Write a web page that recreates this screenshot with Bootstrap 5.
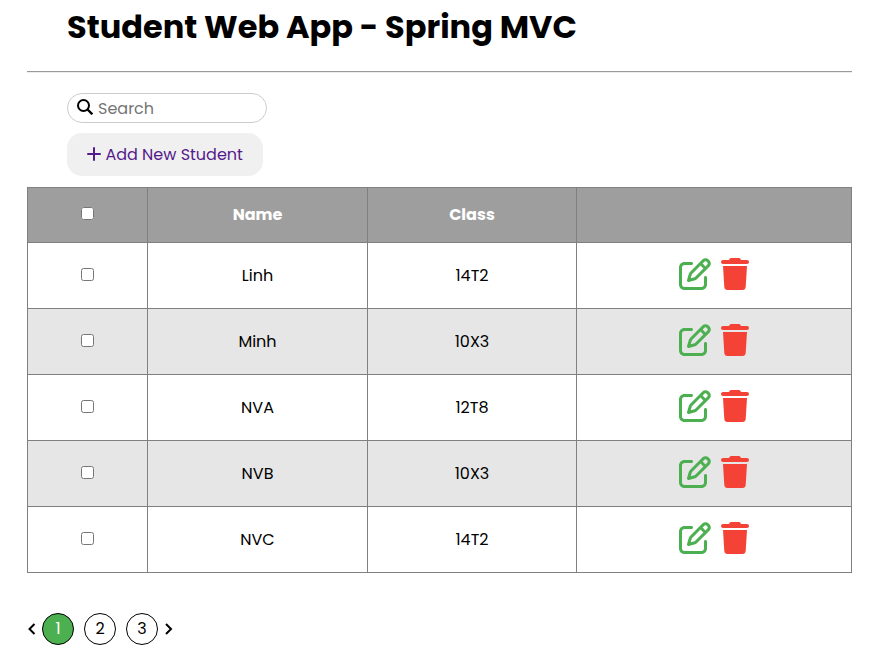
<!DOCTYPE html>
<html lang="en">
<head>
<meta charset="utf-8">
<meta name="viewport" content="width=device-width, initial-scale=1">
<title>Student Web App</title>
<link href="https://cdn.jsdelivr.net/npm/bootstrap@5.3.0/dist/css/bootstrap.min.css" rel="stylesheet">
<style>
body{font-family:Poppins,Inter,"Open Sans",sans-serif;font-size:16px;color:#000;background:#fff;overflow:hidden}
.page{width:825px;margin-left:27px;padding-top:3px}
.title{font-size:32px;line-height:48px;font-weight:700;margin:0 0 0 40px;white-space:nowrap}
.rule{height:2px;border:0;border-top:1px solid #9a9a9a;border-bottom:1px solid #ededed;opacity:1;margin:20px 0 20px;background:none}
.search{width:200px;height:30px;border:1px solid #ccc;border-radius:15px;margin-left:40px;padding:2px 0 0 9px}
.search input{width:150px;padding:0;margin-left:5px;outline:0;line-height:24px}
.search input::placeholder{color:#757575;opacity:1}
.add{width:196px;height:43px;background:#f0f0f0;border-radius:15px;margin:10px 0 11px 40px;color:#551a8b;padding-left:20px;white-space:nowrap}
.add:hover{color:#551a8b}
.add svg{margin-right:4.4px;margin-bottom:1px}
.students{table-layout:fixed;width:825px;border-collapse:collapse}
.students th,.students td{border:1px solid #808080;padding:0;height:66px}
.students th{height:55px;background:#9e9e9e;color:#fff;font-weight:700}
.students tbody tr:nth-child(even){background:#e6e6e6}
.students input{width:13px;height:13px;margin:0 auto 2px;display:block}
.students th input{margin-bottom:3px}
.actions{gap:10.5px;padding:0 .5px 4px 0}
.pager{margin-top:40px;height:32px}
.pager a{color:#000;text-decoration:none}
.prev{margin-right:5px}
.num{width:32px;height:32px;border:1px solid #000;border-radius:50%;margin-right:10px}
.pager .num.current{background:#4caf50;color:#fff}
.num.final{margin-right:5px}
</style>
<script src="https://cdn.jsdelivr.net/npm/bootstrap@5.3.0/dist/js/bootstrap.bundle.min.js"></script>
</head>
<body>
<svg class="d-none">
<symbol id="edit" viewBox="0 0 512 512"><path fill="#4caf50" d="M441 58.900L453.100 71c9.400 9.400 9.400 24.600 0 33.900L424 134.100 377.900 88 407 58.900c9.400-9.400 24.600-9.400 33.900 0zM209.800 256.200L344 121.900 390.100 168 255.800 302.200c-2.900 2.900-6.500 5-10.400 6.100l-58.500 16.700 16.700-58.500c1.100-3.900 3.200-7.500 6.100-10.400zM373.100 25L175.800 222.200c-8.700 8.700-15 19.400-18.300 31.100l-28.600 100c-2.400 8.400-.1 17.400 6.100 23.600s15.200 8.500 23.600 6.100l100-28.600c11.800-3.400 22.500-9.700 31.100-18.300L487 138.900c28.100-28.100 28.100-73.700 0-101.800L474.900 25C446.800-3.100 401.200-3.100 373.100 25zM88 64C39.400 64 0 103.400 0 152V424c0 48.600 39.400 88 88 88H360c48.600 0 88-39.400 88-88V312c0-13.300-10.700-24-24-24s-24 10.700-24 24V424c0 22.100-17.900 40-40 40H88c-22.100 0-40-17.900-40-40V152c0-22.100 17.900-40 40-40H200c13.300 0 24-10.700 24-24s-10.700-24-24-24H88z"/></symbol>
<symbol id="trash" viewBox="0 0 448 512"><path fill="#f44336" d="M135.200 17.700C140.600 6.800 151.700 0 163.800 0H284.200c12.100 0 23.200 6.800 28.600 17.700L320 32h96c17.700 0 32 14.300 32 32s-14.300 32-32 32H32C14.300 96 0 81.700 0 64S14.300 32 32 32h96zM32 128H416L394.800 467c-1.600 25.300-22.600 45-47.900 45H101.100c-25.300 0-46.300-19.700-47.900-45z"/></symbol>
</svg>
<main class="page">
<h1 class="title">Student Web App - Spring MVC</h1>
<hr class="rule">
<div class="search d-flex align-items-center">
<svg width="16" height="16" viewBox="0 0 16 16" fill="none" stroke="#000" stroke-width="2" class="flex-shrink-0 mb-1"><circle cx="6.500" cy="6.500" r="5.500"/><path d="M10.300 10.300l5 5" stroke-width="2.300"/></svg>
<input class="border-0 bg-transparent" type="text" placeholder="Search">
</div>
<a href="#" class="add d-flex align-items-center text-decoration-none">
<svg width="14" height="14" viewBox="0 0 14 14" stroke="#551a8b" stroke-width="2" stroke-linecap="round"><path d="M7 1v12M1 7h12"/></svg><span>Add New Student</span></a>
<table class="students text-center align-middle">
<colgroup><col style="width:120px"><col style="width:220px"><col style="width:209px"><col style="width:275px"></colgroup>
<thead><tr><th><input type="checkbox"></th><th>Name</th><th>Class</th><th></th></tr></thead>
<tbody>
<tr><td><input type="checkbox"></td><td>Linh</td><td>14T2</td><td><div class="actions d-flex justify-content-center"><svg width="32" height="32"><use href="#edit"/></svg><svg width="28" height="32"><use href="#trash"/></svg></div></td></tr>
<tr><td><input type="checkbox"></td><td>Minh</td><td>10X3</td><td><div class="actions d-flex justify-content-center"><svg width="32" height="32"><use href="#edit"/></svg><svg width="28" height="32"><use href="#trash"/></svg></div></td></tr>
<tr><td><input type="checkbox"></td><td>NVA</td><td>12T8</td><td><div class="actions d-flex justify-content-center"><svg width="32" height="32"><use href="#edit"/></svg><svg width="28" height="32"><use href="#trash"/></svg></div></td></tr>
<tr><td><input type="checkbox"></td><td>NVB</td><td>10X3</td><td><div class="actions d-flex justify-content-center"><svg width="32" height="32"><use href="#edit"/></svg><svg width="28" height="32"><use href="#trash"/></svg></div></td></tr>
<tr><td><input type="checkbox"></td><td>NVC</td><td>14T2</td><td><div class="actions d-flex justify-content-center"><svg width="32" height="32"><use href="#edit"/></svg><svg width="28" height="32"><use href="#trash"/></svg></div></td></tr>
</tbody>
</table>
<nav class="pager d-flex align-items-center">
<svg width="10" height="16" viewBox="0 0 10 16" fill="none" stroke="#000" stroke-width="2" class="prev"><path d="M7.500 3l-5 5 5 5"/></svg>
<a href="#" class="num current d-flex align-items-center justify-content-center">1</a>
<a href="#" class="num d-flex align-items-center justify-content-center">2</a>
<a href="#" class="num final d-flex align-items-center justify-content-center">3</a>
<svg width="10" height="16" viewBox="0 0 10 16" fill="none" stroke="#000" stroke-width="2"><path d="M3 3l5 5-5 5"/></svg>
</nav>
</main>
</body>
</html>
